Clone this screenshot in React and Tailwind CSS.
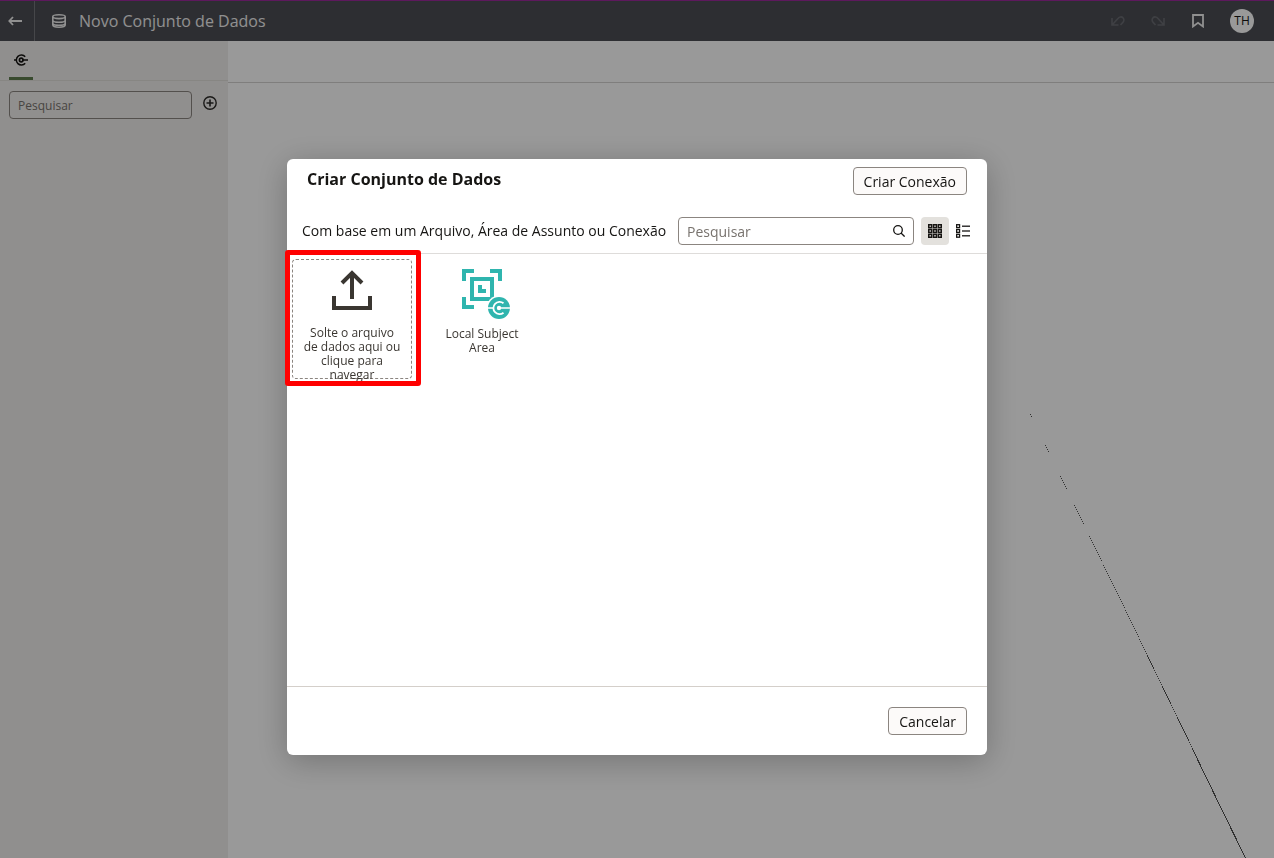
import React from "react";

// Dotted stretches of the join line: start x, start y, number of dots.
const DOT_RUNS = [
  [1030, 414, 2],
  [1045, 445, 4],
  [1060, 476, 7],
  [1074, 505, 10],
  [1089, 536, 13],
  [1103, 565, 22],
  [1125, 610, 14],
  [1139, 639, 8],
  [1154, 670, 8],
  [1171, 705, 6],
  [1189, 742, 3],
];

const DOTS = DOT_RUNS.map(([x, y, n]) =>
  Array.from({ length: n }, (_, i) => `M${x + i} ${y + i * 2}h1v1h-1z`).join("")
).join("");

function BackIcon() {
  return (
    <svg width="14" height="10" viewBox="0 0 14 10" fill="none" stroke="currentColor" strokeWidth="1.8" aria-hidden="true">
      <path d="M14 5H1.500M5 1 1.300 5 5 9" />
    </svg>
  );
}

function DatabaseIcon() {
  return (
    <svg width="16" height="16" viewBox="0 0 16 16" fill="none" stroke="currentColor" strokeWidth="1.6" aria-hidden="true">
      <path d="M1.800 3.600C1.800 2.200 4 1.800 8 1.800s6.200.4 6.200 1.800S12 5.600 8 5.600s-6.200-.6-6.200-2zM1.800 3.600v3.600c0 1.200 2.200 2 6.200 2s6.200-.8 6.200-2V3.600M1.800 7.200v3c0 1.200 2.200 2 6.200 2s6.200-.8 6.200-2v-3M1.800 10v2c0 1.400 2.200 2.200 6.200 2.200s6.200-.8 6.200-2.200v-2" />
    </svg>
  );
}

function UndoIcon({ className = "" }) {
  return (
    <svg className={className} width="16" height="12" viewBox="0 0 16 12" fill="none" stroke="currentColor" strokeWidth="1.600" aria-hidden="true">
      <path d="M2 3v7h6.500M2.300 9.700 8.200 3.200c1.300-1.500 3.400-1.700 4.700-.5 1.300 1.300 1.300 3.400 0 4.700L10.500 10" />
    </svg>
  );
}

function BookmarkIcon() {
  return (
    <svg width="12" height="14" viewBox="0 0 12 14" fill="none" stroke="currentColor" strokeWidth="1.8" aria-hidden="true">
      <path d="M1 1h10v11.500L6 8.800 1 12.500z" />
    </svg>
  );
}

function ConnectionIcon() {
  return (
    <svg width="14" height="12" viewBox="0 0 14 12" fill="none" stroke="currentColor" aria-hidden="true">
      <path d="M11.200 2.800A5 5 0 1 0 11.200 9.200" strokeWidth="1.500" />
      <circle cx="7.200" cy="6" r="1.800" strokeWidth="1.700" />
      <path d="M8.500 6H14M0 6h2.500" strokeWidth="1.500" />
    </svg>
  );
}

function AddIcon() {
  return (
    <svg width="14" height="14" viewBox="0 0 14 14" fill="none" stroke="currentColor" strokeWidth="1.400" aria-hidden="true">
      <circle cx="7" cy="7" r="6.200" />
      <path d="M7 3.500v7M3.500 7h7" strokeWidth="1.600" />
    </svg>
  );
}

function SearchIcon() {
  return (
    <svg width="12" height="12" viewBox="0 0 12 12" fill="none" stroke="currentColor" strokeWidth="1.300" aria-hidden="true">
      <circle cx="5" cy="5" r="4.300" />
      <path d="m8 8 3.600 3.600" />
    </svg>
  );
}

function GridIcon() {
  return (
    <svg width="14" height="14" viewBox="0 0 14 14" fill="none" stroke="currentColor" strokeWidth="1.500" aria-hidden="true">
      {[0, 4.8, 9.6].map((y) =>
        [0, 4.8, 9.6].map((x) => <rect key={`${x}-${y}`} x={x + 0.75} y={y + 0.75} width="2.900" height="2.900" />)
      )}
    </svg>
  );
}

function ListIcon() {
  return (
    <svg width="14" height="14" viewBox="0 0 14 14" fill="none" stroke="currentColor" strokeWidth="1.300" aria-hidden="true">
      {[0, 4.8, 9.6].map((y) => (
        <g key={y}>
          <rect x="0.650" y={y + 0.7} width="2.900" height="2.900" />
          <path d={`M6 ${y + 2.2}h8`} />
        </g>
      ))}
    </svg>
  );
}

function UploadIcon() {
  return (
    <svg className="shrink-0" width="40" height="40" viewBox="0 0 40 40" fill="none" stroke="#3a3631" strokeWidth="4" aria-hidden="true">
      <path d="M2 26v12h36V26M20 29V3M10 13 20 3l10 10" />
    </svg>
  );
}

function SubjectAreaIcon() {
  return (
    <svg className="shrink-0" width="60" height="52" viewBox="-10 0 60 52" aria-hidden="true">
      <g fill="none" stroke="#2fb5ae" strokeWidth="4">
        <path d="M2 12V2h10M28 2h10v10M2 28v10h10" />
        <rect x="10" y="10" width="20" height="20" />
        <path d="M18 16v6h6" />
      </g>
      <path d="M20 20h4v4h-4z" fill="#2fb5ae" />
      <circle cx="37" cy="39" r="12.500" fill="#fff" />
      <circle cx="37" cy="39" r="11" fill="#2fb5ae" />
      <path d="M41.500 34.200A6.200 6.200 0 1 0 41.500 43.800" fill="none" stroke="#fff" strokeWidth="1.800" />
      <path d="M38 39h10M26 39h5" stroke="#fff" strokeWidth="1.500" />
      <circle cx="37" cy="39" r="2.200" fill="#fff" />
    </svg>
  );
}

function TopBar() {
  return (
    <header className="flex h-[41px] items-center border-t border-[#9c2a9c] bg-[#4c4e54] text-[#f0f0f0]">
      <button type="button" aria-label="Voltar" className="flex h-full w-[35px] items-center justify-center border-r border-[#75777c] pr-1">
        <BackIcon />
      </button>
      <div className="flex flex-1 items-center gap-3 pl-4">
        <DatabaseIcon />
        <h1 className="text-base leading-6">Novo Conjunto de Dados</h1>
      </div>
      <div className="flex items-center gap-6 pr-5">
        <button type="button" aria-label="Desfazer" disabled className="text-[#696b72]">
          <UndoIcon />
        </button>
        <button type="button" aria-label="Refazer" disabled className="text-[#696b72]">
          <UndoIcon className="-scale-x-100" />
        </button>
        <button type="button" aria-label="Marcador" className="flex w-4 justify-center">
          <BookmarkIcon />
        </button>
        <button type="button" className="size-6 rounded-full bg-white text-xs text-[#161513]">
          TH
        </button>
      </div>
    </header>
  );
}

function Sidebar() {
  return (
    <aside className="w-[228px] shrink-0 bg-[#f1efed] text-[#2c2a28]">
      <div className="flex h-10 border-b border-[#e2dfdb] px-[9px]">
        <button type="button" aria-label="Conexões" className="flex w-6 items-center justify-center border-b-3 border-[#5f7d4f] pt-0.5 text-[#161513]">
          <ConnectionIcon />
        </button>
      </div>
      <div className="flex items-center gap-[11px] px-[9px] pt-[10px]">
        <input
          type="text"
          aria-label="Pesquisar dados"
          placeholder="Pesquisar"
          className="h-7 min-w-0 flex-1 rounded border border-[#8b8580] bg-transparent px-2 text-xs placeholder:text-[#78736e]"
        />
        <button type="button" aria-label="Adicionar" className="mr-0.5 mb-1">
          <AddIcon />
        </button>
      </div>
    </aside>
  );
}

function CreateDialog() {
  return (
    <section
      role="dialog"
      aria-modal="true"
      aria-labelledby="dialog-title"
      className="w-[700px] max-w-full rounded-md bg-white text-[#161513] shadow-[0_6px_32px_rgba(0,0,0,0.25)]"
    >
      <header className="flex items-start justify-between px-5 pt-2">
        <h2 id="dialog-title" className="text-base leading-6 font-bold">
          Criar Conjunto de Dados
        </h2>
        <button type="button" className="h-7 rounded border border-[#8b8580] bg-[#fcfaf9] px-[10px] pt-px text-sm">
          Criar Conexão
        </button>
      </header>

      <div className="mt-[22px] flex items-center border-b border-[#dedcda] pr-[10px] pb-2 pl-[15px]">
        <label htmlFor="source-search" className="flex-1 text-sm">
          Com base em um Arquivo, Área de Assunto ou Conexão
        </label>
        <div className="flex h-7 w-[236px] items-center rounded border border-[#8b8580] pr-2">
          <input
            id="source-search"
            type="text"
            placeholder="Pesquisar"
            className="min-w-0 flex-1 bg-transparent px-2 pt-0.5 text-sm outline-none placeholder:text-[#78736e]"
          />
          <SearchIcon />
        </div>
        <button type="button" aria-label="Exibir em grade" className="ml-[7px] flex size-7 items-center justify-center rounded bg-[#e3e1dd]">
          <GridIcon />
        </button>
        <button type="button" aria-label="Exibir em lista" className="flex size-7 items-center justify-center">
          <ListIcon />
        </button>
      </div>

      <div className="flex min-h-[432px] gap-[10px] px-[5px] pt-[5px]">
        <div className="relative size-[120px]">
          <button
            type="button"
            className="flex size-full flex-col items-center rounded border border-dashed border-[#8b8580] px-[10px] pt-[10px] text-xs leading-[14px] text-[#3a3631]"
          >
            <UploadIcon />
            <span className="mt-4">Solte o arquivo de dados aqui ou clique para navegar</span>
          </button>
          <span aria-hidden="true" className="pointer-events-none absolute -top-[9px] -left-[7px] size-[136px] rounded-[3px] border-5 border-[#ff0000]" />
        </div>
        <button type="button" className="flex h-[120px] w-[120px] flex-col items-center px-5 pt-[10px] text-xs leading-[14px] text-[#3a3631]">
          <SubjectAreaIcon />
          <span className="mt-1.5">Local Subject Area</span>
        </button>
      </div>

      <footer className="flex justify-end border-t border-[#d4cfca] px-5 py-5">
        <button type="button" className="h-7 rounded border border-[#8b8580] bg-[#fcfaf9] px-[10px] pt-px text-sm">
          Cancelar
        </button>
      </footer>
    </section>
  );
}

export default function App() {
  return (
    <div className="relative flex min-h-screen flex-col overflow-hidden bg-white font-['Open_Sans','Noto_Sans',sans-serif]">
      <TopBar />
      <div className="flex flex-1">
        <Sidebar />
        <main className="flex-1">
          <div className="h-[42px] border-b border-[#d4d2d0]" />
        </main>
      </div>
      <svg className="pointer-events-none absolute top-0 left-0" width="1274" height="858" viewBox="0 0 1274 858" shapeRendering="crispEdges" aria-hidden="true">
        <path d={DOTS} fill="#505050" />
        <path d="M1147 655l7 14M1162 686l9 18M1177 717l12 24M1192 748l30 62M1222 810l23.500 48" fill="none" stroke="#505050" strokeWidth="1" />
      </svg>
      <div className="fixed inset-0 flex items-start justify-center bg-black/40 pt-[159px]">
        <CreateDialog />
      </div>
    </div>
  );
}
